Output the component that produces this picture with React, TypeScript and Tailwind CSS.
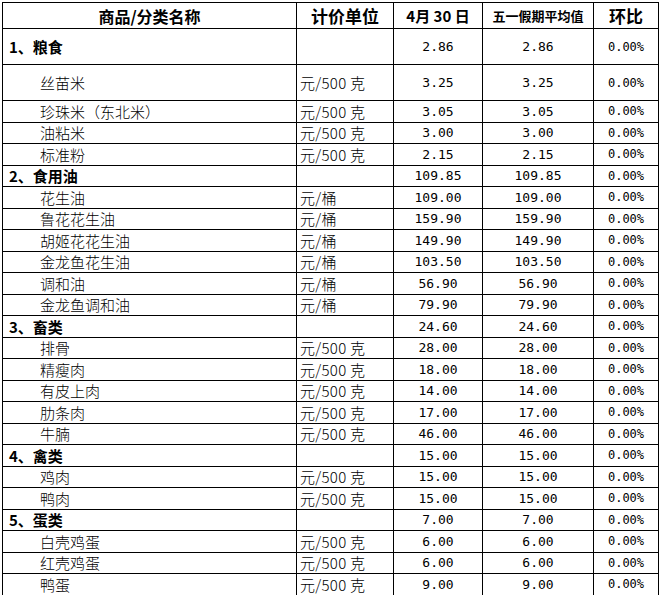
import React from "react"

type Row = {
  name: string
  unit?: string
  day: string
  avg: string
  ratio: string
  category?: boolean
  tall?: boolean
}

const rows: Row[] = [
  { name: "1、粮食", day: "2.86", avg: "2.86", ratio: "0.00%", category: true, tall: true },
  { name: "丝苗米", unit: "元/500 克", day: "3.25", avg: "3.25", ratio: "0.00%", tall: true },
  { name: "珍珠米（东北米）", unit: "元/500 克", day: "3.05", avg: "3.05", ratio: "0.00%" },
  { name: "油粘米", unit: "元/500 克", day: "3.00", avg: "3.00", ratio: "0.00%" },
  { name: "标准粉", unit: "元/500 克", day: "2.15", avg: "2.15", ratio: "0.00%" },
  { name: "2、食用油", day: "109.85", avg: "109.85", ratio: "0.00%", category: true },
  { name: "花生油", unit: "元/桶", day: "109.00", avg: "109.00", ratio: "0.00%" },
  { name: "鲁花花生油", unit: "元/桶", day: "159.90", avg: "159.90", ratio: "0.00%" },
  { name: "胡姬花花生油", unit: "元/桶", day: "149.90", avg: "149.90", ratio: "0.00%" },
  { name: "金龙鱼花生油", unit: "元/桶", day: "103.50", avg: "103.50", ratio: "0.00%" },
  { name: "调和油", unit: "元/桶", day: "56.90", avg: "56.90", ratio: "0.00%" },
  { name: "金龙鱼调和油", unit: "元/桶", day: "79.90", avg: "79.90", ratio: "0.00%" },
  { name: "3、畜类", day: "24.60", avg: "24.60", ratio: "0.00%", category: true },
  { name: "排骨", unit: "元/500 克", day: "28.00", avg: "28.00", ratio: "0.00%" },
  { name: "精瘦肉", unit: "元/500 克", day: "18.00", avg: "18.00", ratio: "0.00%" },
  { name: "有皮上肉", unit: "元/500 克", day: "14.00", avg: "14.00", ratio: "0.00%" },
  { name: "肋条肉", unit: "元/500 克", day: "17.00", avg: "17.00", ratio: "0.00%" },
  { name: "牛腩", unit: "元/500 克", day: "46.00", avg: "46.00", ratio: "0.00%" },
  { name: "4、禽类", day: "15.00", avg: "15.00", ratio: "0.00%", category: true },
  { name: "鸡肉", unit: "元/500 克", day: "15.00", avg: "15.00", ratio: "0.00%" },
  { name: "鸭肉", unit: "元/500 克", day: "15.00", avg: "15.00", ratio: "0.00%" },
  { name: "5、蛋类", day: "7.00", avg: "7.00", ratio: "0.00%", category: true },
  { name: "白壳鸡蛋", unit: "元/500 克", day: "6.00", avg: "6.00", ratio: "0.00%" },
  { name: "红壳鸡蛋", unit: "元/500 克", day: "6.00", avg: "6.00", ratio: "0.00%" },
  { name: "鸭蛋", unit: "元/500 克", day: "9.00", avg: "9.00", ratio: "0.00%" },
]

const cjk = "font-['Noto_Sans_CJK_SC',sans-serif]"
const mono = "font-['DejaVu_Sans_Mono','Noto_Sans_CJK_SC',monospace]"

export default function App() {
  return (
    <div className="w-[661px] h-[595px] overflow-hidden bg-white pt-[2px] pl-[2px] text-black">
      <table className={`table-fixed border-collapse w-[656px] ${cjk}`}>
        <colgroup>
          <col className="w-[294px]" />
          <col className="w-[97px]" />
          <col className="w-[89px]" />
          <col className="w-[111px]" />
          <col className="w-[65px]" />
        </colgroup>
        <thead>
          <tr className="h-[26px]">
            <th className="border border-black text-[16px] font-bold leading-none text-center p-0">商品/分类名称</th>
            <th className="border border-black text-[17px] font-bold leading-none text-center p-0">计价单位</th>
            <th className="border border-black text-[15px] font-bold leading-none text-center p-0">4月 30 日</th>
            <th className="border border-black text-[13px] font-bold leading-none text-center p-0">五一假期平均值</th>
            <th className="border border-black text-[17px] font-bold leading-none text-center p-0">环比</th>
          </tr>
        </thead>
        <tbody>
          {rows.map((r) => (
            <tr key={r.name} className={r.tall ? "h-[36px]" : "h-[21.5px]"}>
              <td
                className={`border border-black p-0 leading-none whitespace-nowrap ${
                  r.category ? "pl-[6px] text-[15px] font-bold" : "pl-[37px] text-[15px] font-light"
                }`}
              >
                {r.name}
              </td>
              <td className="border border-black p-0 pl-[3px] text-[15px] font-light leading-none whitespace-nowrap tracking-[0.3px]">
                {r.unit ?? ""}
              </td>
              <td className={`border border-black p-0 text-center text-[13px] leading-none ${mono}`}>{r.day}</td>
              <td className={`border border-black p-0 text-center text-[13px] leading-none ${mono}`}>{r.avg}</td>
              <td className={`border border-black p-0 text-center text-[12px] leading-none ${mono}`}>{r.ratio}</td>
            </tr>
          ))}
        </tbody>
      </table>
    </div>
  )
}
